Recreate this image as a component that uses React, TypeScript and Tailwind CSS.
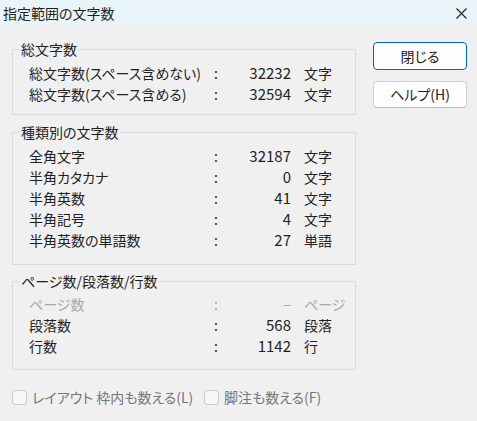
import React from 'react';

type RowProps = { label: string; value: string; unit: string; dim?: boolean };

const Row: React.FC<RowProps> = ({ label, value, unit, dim }) => (
  <div
    className={`grid h-[21px] grid-cols-[185px_12px_65px_auto] items-center whitespace-nowrap ${
      dim ? 'text-[#a8a8a8]' : 'text-[#1f1f1f]'
    }`}
  >
    <span>{label}</span>
    <span>:</span>
    <span className="text-right text-[15px]">{value}</span>
    <span className="pl-[13px]">{unit}</span>
  </div>
);

const Group: React.FC<{ title: string; className?: string; children: React.ReactNode }> = ({ title, className, children }) => (
  <div className={`border border-[#dcdcdc] pl-[7px] ${className ?? ''}`}>
    <div className="-mt-[10px] w-fit bg-[#f0f0f0] px-px leading-[18px] text-[#1f1f1f]">{title}</div>
    {children}
  </div>
);

const Checkbox: React.FC<{ label: string; className?: string }> = ({ label, className }) => (
  <label className={`flex items-center gap-[5px] text-[#777777] ${className ?? ''}`}>
    <span className="h-[15px] w-[15px] shrink-0 rounded-[3px] border border-[#c8c8c8] bg-[#f7f7f7]" />
    <span className="whitespace-nowrap leading-[18px]">{label}</span>
  </label>
);

export default function App() {
  return (
    <div className="h-[421px] w-[477px] overflow-hidden bg-[#f0f0f0] font-['Noto_Sans_CJK_JP','Noto_Sans',sans-serif] text-[14px] [font-feature-settings:'palt']">
      {/* title bar */}
      <div className="flex h-[26px] items-center justify-between bg-[#e8f4f8] pl-[3px] pr-[10px]">
        <span className="text-[14px] leading-[18px] text-[#1f1f1f]">指定範囲の文字数</span>
        <svg width="11" height="11" viewBox="0 0 11 11" className="mt-px">
          <path d="M0.5 0.5L10.5 10.5M10.5 0.5L0.5 10.5" stroke="#1f1f1f" strokeWidth="1.1" />
        </svg>
      </div>

      <div className="flex pl-[12px]">
        {/* left column */}
        <div className="w-[344px]">
          <Group title="総文字数" className="mt-[23px] pb-[10px]">
            <div className="ml-[9px] mt-[4px]">
              <Row label="総文字数(スペース含めない)" value="32232" unit="文字" />
              <Row label="総文字数(スペース含める)" value="32594" unit="文字" />
            </div>
          </Group>

          <Group title="種類別の文字数" className="mt-[17px] pb-[14px]">
            <div className="ml-[9px] mt-[4px]">
              <Row label="全角文字" value="32187" unit="文字" />
              <Row label="半角カタカナ" value="0" unit="文字" />
              <Row label="半角英数" value="41" unit="文字" />
              <Row label="半角記号" value="4" unit="文字" />
              <Row label="半角英数の単語数" value="27" unit="単語" />
            </div>
          </Group>

          <Group title="ページ数/段落数/行数" className="mt-[16px] pb-[13px]">
            <div className="ml-[9px] mt-[3px]">
              <Row label="ページ数" value="–" unit="ページ" dim />
              <Row label="段落数" value="568" unit="段落" />
              <Row label="行数" value="1142" unit="行" />
            </div>
          </Group>

          <div className="mt-[18px] flex">
            <Checkbox label="レイアウト 枠内も数える(L)" className="w-[192px]" />
            <Checkbox label="脚注も数える(F)" />
          </div>
        </div>

        {/* right column */}
        <div className="ml-[17px] mt-[16px] flex w-[94px] flex-col gap-[11px]">
          <button className="h-[28px] rounded-[4px] border border-[#0067c0] bg-[#fdfdfd] text-[#1f1f1f]">閉じる</button>
          <button className="h-[27px] rounded-[4px] border border-[#d0d0d0] border-b-[#bdbdbd] bg-[#fdfdfd] text-[#1f1f1f]">
            ヘルプ(H)
          </button>
        </div>
      </div>
    </div>
  );
}
